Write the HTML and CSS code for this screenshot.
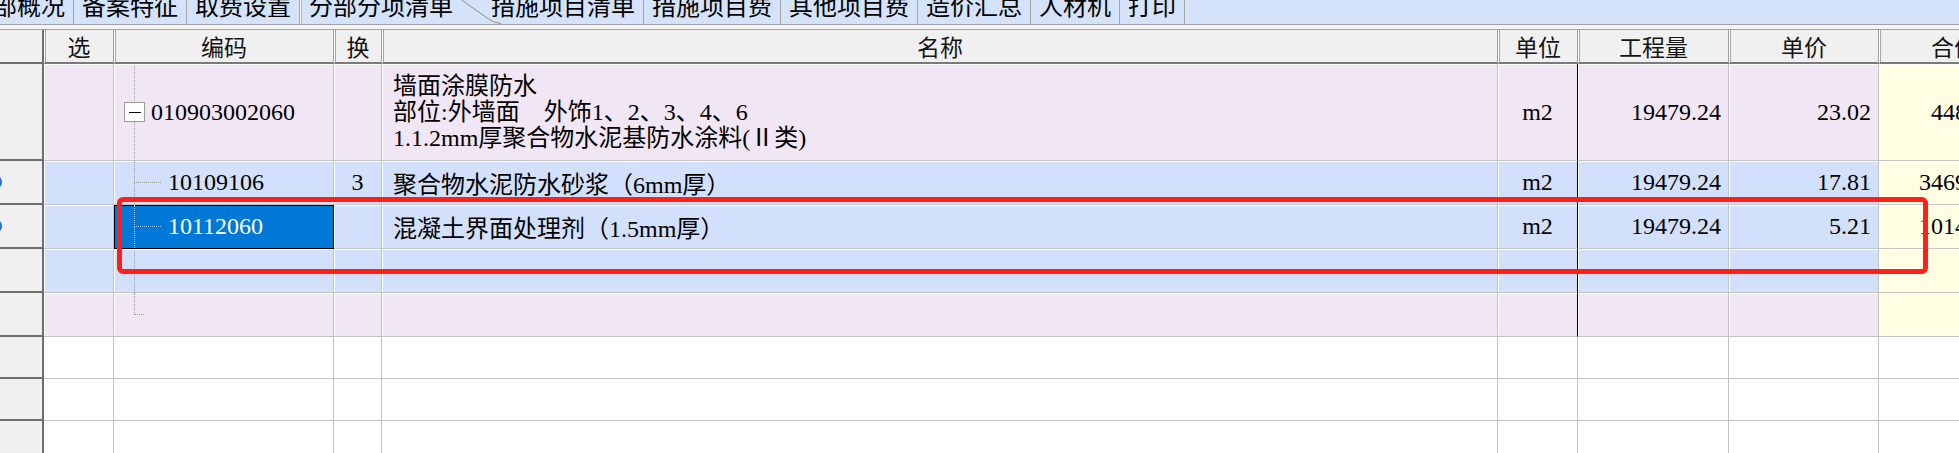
FILE: index.html
```html
<!DOCTYPE html>
<html lang="zh-CN">
<head>
<meta charset="utf-8">
<title>分部分项清单</title>
<link rel="stylesheet" href="styles.css">
</head>
<body>
<div class="page">
  <div class="tabs">
    <div class="tab first">部概况</div>
    <div class="tab">备案特征</div>
    <div class="tab">取费设置</div>
    <div class="tab active">分部分项清单</div>
    <svg class="tab-curve" width="40" height="24" viewBox="0 0 40 24"><path d="M0.5 0 L27 18.5 Q32 23 40 23.5" fill="none" stroke="#8c8c8c" stroke-width="1"/></svg>
    <div class="tab">措施项目清单</div>
    <div class="tab">措施项目费</div>
    <div class="tab">其他项目费</div>
    <div class="tab">造价汇总</div>
    <div class="tab">人材机</div>
    <div class="tab">打印</div>
  </div>
  <div class="band"></div>

  <div class="grid">
    <div class="row head">
      <div class="corner"></div>
      <div class="hc">选</div>
      <div class="hc">编码</div>
      <div class="hc">换</div>
      <div class="hc">名称</div>
      <div class="hc">单位</div>
      <div class="hc">工程量</div>
      <div class="hc">单价</div>
      <div class="hc">合价</div>
    </div>

    <div class="row pink tall">
      <div class="rh"></div>
      <div class="c"></div>
      <div class="c code vguide"><span class="toggle"></span><span class="code-txt">010903002060</span></div>
      <div class="c"></div>
      <div class="c name"><div class="lines">墙面涂膜防水<br>部位:外墙面　外饰1、2、3、4、6<br>1.1.2mm厚聚合物水泥基防水涂料(Ⅱ类)</div></div>
      <div class="c unit mark-r">m2</div>
      <div class="c num">19479.24</div>
      <div class="c num">23.02</div>
      <div class="c num yellow">448412.1</div>
    </div>

    <div class="row blue r44">
      <div class="rh"><span class="mark"></span></div>
      <div class="c"></div>
      <div class="c code"><span class="tree"><span class="tree-top"></span><span class="tree-bot"></span></span><span class="sub-txt">10109106</span></div>
      <div class="c ctr">3</div>
      <div class="c name">聚合物水泥防水砂浆（6mm厚）</div>
      <div class="c unit mark-r">m2</div>
      <div class="c num">19479.24</div>
      <div class="c num">17.81</div>
      <div class="c num yellow">346925.26</div>
    </div>

    <div class="row blue r44">
      <div class="rh"><span class="mark"></span></div>
      <div class="c"></div>
      <div class="c code sel"><span class="tree"><span class="tree-top"></span><span class="tree-bot"></span></span><span class="sub-txt">10112060</span></div>
      <div class="c"></div>
      <div class="c name">混凝土界面处理剂（1.5mm厚）</div>
      <div class="c unit mark-r">m2</div>
      <div class="c num">19479.24</div>
      <div class="c num">5.21</div>
      <div class="c num yellow">101486.84</div>
    </div>

    <div class="row blue r44">
      <div class="rh"></div>
      <div class="c"></div>
      <div class="c code vguide"></div>
      <div class="c"></div>
      <div class="c name"></div>
      <div class="c unit mark-r"></div>
      <div class="c num"></div>
      <div class="c num"></div>
      <div class="c num yellow"></div>
    </div>

    <div class="row pink r44">
      <div class="rh"></div>
      <div class="c"></div>
      <div class="c code"><span class="tree short"><span class="tree-top"></span><span class="tree-bot none"></span></span></div>
      <div class="c"></div>
      <div class="c name"></div>
      <div class="c unit mark-r"></div>
      <div class="c num"></div>
      <div class="c num"></div>
      <div class="c num yellow"></div>
    </div>

    <div class="row white r42">
      <div class="rh"></div>
      <div class="c"></div><div class="c"></div><div class="c"></div><div class="c"></div>
      <div class="c"></div><div class="c"></div><div class="c"></div><div class="c"></div>
    </div>
    <div class="row white r42">
      <div class="rh"></div>
      <div class="c"></div><div class="c"></div><div class="c"></div><div class="c"></div>
      <div class="c"></div><div class="c"></div><div class="c"></div><div class="c"></div>
    </div>
    <div class="row white r42">
      <div class="rh"></div>
      <div class="c"></div><div class="c"></div><div class="c"></div><div class="c"></div>
      <div class="c"></div><div class="c"></div><div class="c"></div><div class="c"></div>
    </div>
  </div>

  <div class="annot"></div>
</div>
</body>
</html>
```

FILE: styles.css
```css
* { box-sizing: border-box; }

html, body {
  margin: 0;
  padding: 0;
  background: #ffffff;
}

.page {
  position: relative;
  width: 1959px;
  height: 453px;
  overflow: hidden;
  background: #ffffff;
}

/* ---------- tab bar ---------- */
.tabs {
  display: flex;
  height: 25px;
  background: #d4e3fa;
  border-bottom: 1px solid #a0a0a0;
  overflow: hidden;
  font-family: "Noto Sans CJK SC", sans-serif;
  font-size: 24px;
  color: #000;
}

.tab {
  flex: none;
  height: 24px;
  padding: 0 8px;
  line-height: 10px;
  border-right: 1px solid #a4a4a4;
  white-space: nowrap;
}

.tab.first {
  margin-left: -15px;
}

.tab.active {
  border-right: none;
  border-left: 1px solid #ffffff;
  box-shadow: inset 1px 0 0 #b4b4b4;
}

.tab-curve {
  flex: none;
  display: block;
  margin-right: -18px;
}

.band {
  height: 5px;
  background: #f3f3f3;
  border-bottom: 1px solid #a0a0a0;
}

/* ---------- grid ---------- */
.row {
  display: grid;
  grid-template-columns: 44px 70px 220px 48px 1116px 80px 151px 150px 150px;
  width: 2029px;
}

.head { height: 34px; }
.tall { height: 97px; }
.r44 { height: 44px; }
.r42 { height: 42px; }

.pink { background: #f1e6f3; }
.blue { background: #d3e0fb; }
.white { background: #ffffff; }

.corner {
  background: #f0f0f0;
  border-right: 2px solid #6e6e6e;
  border-bottom: 2px solid #6e6e6e;
}

.hc {
  display: flex;
  align-items: center;
  justify-content: center;
  background: #f0f0f0;
  border-left: 1px solid #ffffff;
  border-right: 1px solid #a0a0a0;
  border-bottom: 2px solid #7a7a7a;
  box-shadow: inset 1px 0 0 #a8a8a8;
  font-family: "Noto Sans CJK SC", sans-serif;
  font-size: 23px;
  color: #141414;
  white-space: nowrap;
  overflow: hidden;
}

.rh {
  display: flex;
  align-items: center;
  background: #f0f0f0;
  border-right: 2px solid #6e6e6e;
  border-bottom: 2px solid #6e6e6e;
  overflow: hidden;
}

.mark {
  flex: none;
  width: 14px;
  height: 14px;
  margin-left: -12px;
  border: 2px solid #1f6fd0;
  border-radius: 50%;
}

.c {
  display: flex;
  align-items: center;
  min-width: 0;
  border-right: 1px solid #c4c4c4;
  border-bottom: 1px solid #c4c4c4;
  box-shadow: inset 1px 1px 0 #ffffff;
  font-family: "Liberation Serif", "Noto Sans CJK SC", serif;
  font-size: 24px;
  color: #000;
  white-space: nowrap;
  overflow: hidden;
}

.white .c { box-shadow: none; }

.yellow { background: #fffde2; }

.mark-r { border-right-color: #000000; }

.ctr { justify-content: center; }
.unit { justify-content: center; }

.num {
  justify-content: flex-end;
  padding-right: 7px;
}

.name { padding-left: 11px; }

.lines { line-height: 26px; }

/* tree column */
.vguide {
  background: linear-gradient(#a0a0a0 50%, transparent 50%) 20px 0 / 1px 2px repeat-y;
}

.toggle {
  flex: none;
  display: flex;
  align-items: center;
  justify-content: center;
  width: 21px;
  height: 20px;
  margin-left: 10px;
  background: #ffffff;
  border: 1px solid #9a9a9a;
}

.toggle::before {
  content: "";
  display: block;
  width: 12px;
  height: 1px;
  background: #000;
}

.code-txt { margin-left: 6px; }

.tree {
  flex: none;
  align-self: stretch;
  display: flex;
  flex-direction: column;
  width: 27px;
  margin-left: 20px;
}

.tree.short { width: 10px; }

.tree-top {
  flex: 1;
  border-left: 1px dotted #9c9c9c;
  border-bottom: 1px dotted #9c9c9c;
}

.tree-bot {
  flex: 1;
  border-left: 1px dotted #9c9c9c;
}

.tree-bot.none { border-left: none; }

.sub-txt { margin-left: 7px; }

.sel {
  background: #0078d7;
  color: #ffffff;
  border-right-color: #000;
  border-bottom-color: #000;
  box-shadow: inset 1px 1px 0 #000;
}

.sel .tree-top,
.sel .tree-bot {
  border-color: #9cc3ee;
}

/* annotation */
.annot {
  position: absolute;
  left: 117px;
  top: 197px;
  width: 1811px;
  height: 77px;
  border: 5px solid #ff2018;
  border-radius: 6px;
  pointer-events: none;
}
```
